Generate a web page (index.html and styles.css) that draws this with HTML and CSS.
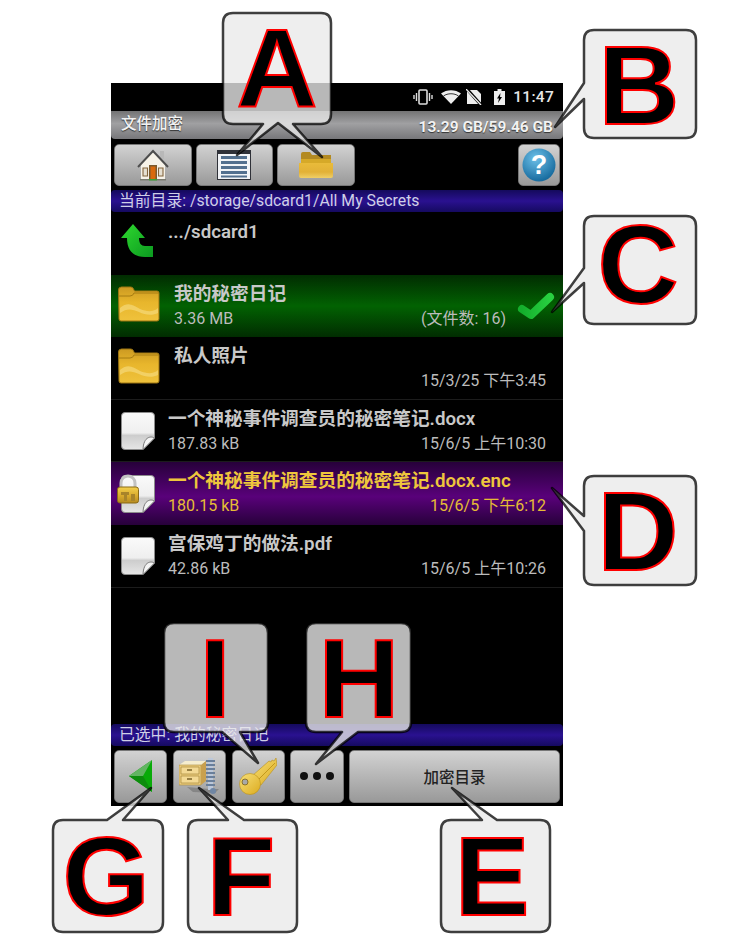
FILE: index.html
```html
<!DOCTYPE html>
<html lang="zh">
<head>
<meta charset="utf-8">
<title>文件加密</title>
<link rel="stylesheet" href="styles.css">
</head>
<body>
<svg class="defs" width="0" height="0" aria-hidden="true">
  <defs>
    <linearGradient id="gFolder" x1="0" y1="0" x2="0" y2="1"><stop offset="0" stop-color="#cc9a22"/><stop offset=".45" stop-color="#e8b62c"/><stop offset="1" stop-color="#efc23c"/></linearGradient>
    <linearGradient id="gOpen" x1="0" y1="0" x2="0" y2="1"><stop offset="0" stop-color="#e9bb3a"/><stop offset=".6" stop-color="#e2b137"/><stop offset="1" stop-color="#f0cf66"/></linearGradient>
    <linearGradient id="gPage" x1="0" y1="0" x2="0" y2="1"><stop offset="0" stop-color="#fafafa"/><stop offset=".55" stop-color="#efefef"/><stop offset=".62" stop-color="#cdcdcd"/><stop offset="1" stop-color="#e6e6e6"/></linearGradient>
    <linearGradient id="gLock" x1="0" y1="0" x2="0" y2="1"><stop offset="0" stop-color="#f3d04e"/><stop offset=".55" stop-color="#d9aa2c"/><stop offset="1" stop-color="#b58a22"/></linearGradient>
    <linearGradient id="gUp" x1="0" y1="0" x2="1" y2="1"><stop offset="0" stop-color="#2fd92f"/><stop offset="1" stop-color="#0b9a20"/></linearGradient>
    <linearGradient id="gCheck" x1="0" y1="0" x2="1" y2="0"><stop offset="0" stop-color="#14ae2c"/><stop offset="1" stop-color="#28d040"/></linearGradient>
    <radialGradient id="gHelp" cx=".4" cy=".3" r=".8"><stop offset="0" stop-color="#6cc0e8"/><stop offset="1" stop-color="#0b5f94"/></radialGradient>
    <linearGradient id="gKey" x1="0" y1="0" x2="1" y2="1"><stop offset="0" stop-color="#f7e07a"/><stop offset="1" stop-color="#dcab1e"/></linearGradient>
    <symbol id="iFolder" viewBox="0 0 42 36">
      <path d="M.5 4a3 3 0 0 1 3-3h9a3 3 0 0 1 3 2l1 2h22.500a2 2 0 0 1 2 2v26a2 2 0 0 1-2 2h-36a2 2 0 0 1-2-2z" fill="url(#gFolder)" stroke="#9c7512"/>
      <path d="M1 10h11q3 0 4-3h25" stroke="#a67c12" fill="none"/>
      <path d="M2 22c8-7 13-3 20 1 7 3 14 3 18-1v5c-6 3-13 2-19-1-7-3-12-4-19 1z" fill="#f7de86" opacity=".6"/>
    </symbol>
    <symbol id="iDoc" viewBox="0 0 34 38">
      <path d="M4 .5h26a3.500 3.500 0 0 1 3.500 3.500v22L22 37.500H4A3.500 3.500 0 0 1 .5 34V4A3.500 3.500 0 0 1 4 .5z" fill="url(#gPage)" stroke="#8c8c8c"/>
      <path d="M33.500 26c-3-2-11-2-11.500 11.500z" fill="#f4f4f4" stroke="#777"/>
    </symbol>
  </defs>
</svg>

<div class="page">
  <main class="phone">
    <div class="status">
      <svg class="st-icon st-vib" viewBox="0 0 20 16"><rect x="6" y="1" width="8" height="14" rx="1" fill="none" stroke="#ddd" stroke-width="1.600"/><path d="M3.500 4v8M1 6v4M16.500 4v8M19 6v4" stroke="#ddd" stroke-width="1.400"/></svg>
      <svg class="st-icon st-wifi" viewBox="0 0 20 14"><path d="M0 3.500C5.500-1 14.500-1 20 3.500L10 14z" fill="#eee"/><path d="M2.500 6c4-3 11-3 15 0" stroke="#000" stroke-width=".8" fill="none"/></svg>
      <svg class="st-icon st-sim" viewBox="0 0 16 16"><path d="M1 1h10l4 4v10H1z" fill="#eee"/><path d="M1 0l14 16" stroke="#000" stroke-width="3"/><path d="M0 0l15 16" stroke="#eee" stroke-width="1.300"/></svg>
      <svg class="st-icon st-bat" viewBox="0 0 11 16"><path d="M3.500 0h4v2H11v14H0V2h3.500z" fill="#eee"/><path d="M6.500 4L3 9.500h2L4 14 8 8H6z" fill="#000"/></svg>
      <span class="time">11:47</span>
    </div>

    <header class="titlebar">
      <span class="title">文件加密</span>
      <span class="storage">13.29 GB/59.46 GB</span>
    </header>

    <nav class="toolbar">
      <button class="btn btn-tool" type="button">
        <svg class="ic-house" viewBox="0 0 32 33">
          <path d="M23 3h4v8h-4z" fill="#b8b8b8"/>
          <path d="M4 15L16 4l12 11v16H4z" fill="#f6f2e8"/>
          <path d="M1 19L16 3l15 16" fill="none" stroke="#4d4d4d" stroke-width="2"/>
          <path d="M12 17h8v14h-8z" fill="#7b5a2e"/>
          <path d="M13.500 18.500h5V31h-5z" fill="#d9690c"/>
          <path d="M6 20h4.500v8H6zM21.500 20H26v8h-4.500z" fill="#e6e0d2" stroke="#84663e" stroke-width="1.100"/>
          <path d="M3 31h26v1.500H3z" fill="#7b7b70"/>
          <path d="M12 31h8v1.500h-8z" fill="#3aa13a"/>
        </svg>
      </button>
      <button class="btn btn-tool" type="button">
        <svg class="ic-list" viewBox="0 0 34 30">
          <path d="M0 0h34v30H0z" fill="#2f3138"/>
          <path d="M1 4h32v25H1z" fill="#f2f4f7"/>
          <path d="M4 6h26v3H4zM4 11h26v3H4zM4 16h26v3H4zM4 21h26v3H4zM4 25.500h26v2H4z" fill="#53708f"/>
        </svg>
      </button>
      <button class="btn btn-tool" type="button">
        <svg class="ic-open" viewBox="0 0 34 26">
          <path d="M2 2q0-2 2-2h7l2 3h19v9H2z" fill="#b38a22"/>
          <path d="M2 7h30v5H2z" fill="#d6a928"/>
          <path d="M0 11h34v13a2 2 0 0 1-2 2H2a2 2 0 0 1-2-2z" fill="url(#gOpen)"/>
        </svg>
      </button>
      <span class="spacer"></span>
      <button class="btn btn-help" type="button">
        <svg class="ic-help" viewBox="0 0 34 34">
          <circle cx="17" cy="17" r="16.500" fill="url(#gHelp)"/>
          <text class="help-mark" x="17" y="26" text-anchor="middle">?</text>
        </svg>
      </button>
    </nav>

    <div class="infobar">当前目录: /storage/sdcard1/All My Secrets</div>

    <section class="list">
      <div class="row row-up">
        <svg class="ic-up" viewBox="0 0 32 33"><path d="M12 0L0 14h6C6 26 12 33 24 33h8V22h-8c-4 0-6-3-6-8h6z" fill="url(#gUp)"/></svg>
        <div class="text">
          <div class="name">.../sdcard1</div>
        </div>
      </div>
      <div class="row row-green row-folder">
        <svg class="ic-folder"><use href="#iFolder"/></svg>
        <div class="text">
          <div class="name">我的秘密日记</div>
          <div class="meta"><span>3.36 MB</span><span>(文件数: 16)</span></div>
        </div>
        <svg class="ic-check" viewBox="0 0 38 28"><path d="M5 17l9 6L33 5" fill="none" stroke="url(#gCheck)" stroke-width="8" stroke-linecap="round" stroke-linejoin="round"/></svg>
      </div>
      <div class="row row-folder row-line">
        <svg class="ic-folder"><use href="#iFolder"/></svg>
        <div class="text">
          <div class="name">私人照片</div>
          <div class="meta"><span></span><span>15/3/25 下午3:45</span></div>
        </div>
      </div>
      <div class="row row-line">
        <svg class="ic-doc"><use href="#iDoc"/></svg>
        <div class="text">
          <div class="name">一个神秘事件调查员的秘密笔记.docx</div>
          <div class="meta"><span>187.83 kB</span><span>15/6/5 上午10:30</span></div>
        </div>
      </div>
      <div class="row row-purple">
        <span class="doc-lock">
          <svg class="ic-doc"><use href="#iDoc"/></svg>
          <svg class="ic-lock" viewBox="0 0 22 30">
            <path d="M4 14V9a7 7 0 0 1 14 0v5" fill="none" stroke="#c2c2c2" stroke-width="3"/>
            <rect x=".5" y="13" width="21" height="16" rx="2.500" fill="url(#gLock)" stroke="#8a6a16"/>
            <path d="M4 18h8v3H4zM7 21h3v6H7zM14 20h4v7h-4z" fill="#a8842a"/>
          </svg>
        </span>
        <div class="text">
          <div class="name">一个神秘事件调查员的秘密笔记.docx.enc</div>
          <div class="meta"><span>180.15 kB</span><span>15/6/5 下午6:12</span></div>
        </div>
      </div>
      <div class="row row-line">
        <svg class="ic-doc"><use href="#iDoc"/></svg>
        <div class="text">
          <div class="name">宫保鸡丁的做法.pdf</div>
          <div class="meta"><span>42.86 kB</span><span>15/6/5 上午10:26</span></div>
        </div>
      </div>
    </section>

    <div class="infobar">已选中: 我的秘密日记</div>

    <nav class="bottombar">
      <button class="btn btn-sq" type="button">
        <svg class="ic-back" viewBox="0 0 23 32"><path d="M23 0v32L0 16z" fill="#08aa08"/><path d="M23 0L0 16h14z" fill="#62b462"/><path d="M0 16l23 16-9-16z" fill="#0c8c0c"/></svg>
      </button>
      <button class="btn btn-sq" type="button">
        <svg class="ic-zip" viewBox="0 0 41 37">
          <path d="M8 29l22 2 10 0-4 4-22-1z" fill="#666" opacity=".5"/>
          <path d="M0 7l6-4h21l-5 4z" fill="#f5edcf"/>
          <path d="M0 7h22v20H0z" fill="#eacb7c" stroke="#a98a3c" stroke-width=".6"/>
          <path d="M22 7l5-4v20l-5 4z" fill="#c9a04e"/>
          <path d="M2 9h18v7H2zM2 18h18v7H2z" fill="#f3d993" stroke="#a98a3c" stroke-width=".7"/>
          <path d="M8 12h5M8 21h5" stroke="#7a6128" stroke-width="1.300"/>
          <path d="M29 0h5v32h-5z" fill="#bcc8da"/>
          <path d="M27 3h9M27 7h9M27 11h9M27 15h9M27 19h9M27 23h9M27 27h9" stroke="#6a7f9a" stroke-width="1.800"/>
          <circle cx="34" cy="33" r="3" fill="#6f86a4"/>
        </svg>
      </button>
      <button class="btn btn-sq" type="button">
        <svg class="ic-key" viewBox="0 0 38 37">
          <path d="M13 18L30 3l2 1 1-2 2 1 2-3 1 7-16 20-6-1z" fill="url(#gKey)" stroke="#b8901c" stroke-width=".6"/>
          <path d="M18 23L36 5" fill="none" stroke="#c2981c" stroke-width="1"/>
          <circle cx="11" cy="26" r="10.500" fill="url(#gKey)" stroke="#b8901c" stroke-width=".6"/>
          <circle cx="6" cy="24" r="3" fill="#a8a8a8" stroke="#7d6214" stroke-width=".8"/>
        </svg>
      </button>
      <button class="btn btn-sq btn-dots" type="button"><i></i><i></i><i></i></button>
      <button class="btn btn-wide" type="button">加密目录</button>
    </nav>
  </main>

  <svg class="callouts" viewBox="0 0 750 939" width="750" height="939">
    <g class="bubble">
      <path d="M233 13H321Q331 13 331 23V114Q331 124 321 124H293L322 157 278 123 237 155 263 124H233Q223 124 223 114V23Q223 13 233 13Z"/>
      <text x="277" y="107">A</text>
    </g>
    <g class="bubble">
      <path d="M594 30H686Q696 30 696 40V128Q696 138 686 138H594Q584 138 584 128V99L555 127 584 83V40Q584 30 594 30Z"/>
      <text x="639" y="124">B</text>
    </g>
    <g class="bubble">
      <path d="M594 216H686Q696 216 696 226V314Q696 324 686 324H594Q584 324 584 314V283L552 312 584 268V226Q584 216 594 216Z"/>
      <text x="638" y="303">C</text>
    </g>
    <g class="bubble">
      <path d="M594 476H686Q696 476 696 486V575Q696 585 686 585H594Q584 585 584 575V531L552 488 584 516V486Q584 476 594 476Z"/>
      <text x="638" y="570">D</text>
    </g>
    <g class="bubble">
      <path d="M451 820H482L452 788 497 820H540Q550 820 550 830V922Q550 932 540 932H451Q441 932 441 922V830Q441 820 451 820Z"/>
      <text x="492" y="915">E</text>
    </g>
    <g class="bubble">
      <path d="M198 820H228L199 788 244 820H287Q297 820 297 830V922Q297 932 287 932H198Q188 932 188 922V830Q188 820 198 820Z"/>
      <text x="241" y="915">F</text>
    </g>
    <g class="bubble">
      <path d="M63 820H107L151 788 123 820H153Q163 820 163 830V922Q163 932 153 932H63Q53 932 53 922V830Q53 820 63 820Z"/>
      <text x="106" y="915">G</text>
    </g>
    <g class="bubble">
      <path d="M374 623H401Q411 623 411 633V722Q411 732 401 732H358L316 764 342 732H316Q306 732 306 722V633Q306 623 316 623Z"/>
      <text x="359" y="717">H</text>
    </g>
    <g class="bubble">
      <path d="M174 623H258Q268 623 268 633V722Q268 732 258 732H240L258 763 222 732H174Q164 732 164 722V633Q164 623 174 623Z"/>
      <text x="215" y="717">I</text>
    </g>
  </svg>
</div>
</body>
</html>
```

FILE: styles.css
```css
* { box-sizing: border-box; }

html, body { margin: 0; padding: 0; background: #fff; }

body { font-family: Roboto, "Noto Sans CJK SC", sans-serif; }

.defs { position: absolute; }

.page {
  position: relative;
  width: 750px;
  height: 939px;
  padding: 83px 187px 0 111px;
  overflow: hidden;
}

.phone {
  width: 452px;
  height: 723px;
  background: #000;
  display: flex;
  flex-direction: column;
  color: #d6d6d6;
}

/* status bar */
.status {
  height: 28px;
  display: flex;
  align-items: center;
  justify-content: flex-end;
  padding-right: 9px;
  flex: none;
}
.st-icon { display: block; flex: none; }
.st-vib { width: 20px; height: 16px; margin-right: 8px; }
.st-wifi { width: 20px; height: 14px; margin-right: 5px; }
.st-sim { width: 16px; height: 16px; margin-right: 12px; }
.st-bat { width: 11px; height: 16px; margin-right: 8px; }
.time { font-size: 15.5px; font-weight: 500; color: #e6e6e6; letter-spacing: .3px; }

/* title bar */
.titlebar {
  height: 28px;
  flex: none;
  display: flex;
  align-items: center;
  justify-content: space-between;
  padding: 0 10px;
  background: linear-gradient(#737374, #a0a0a2 45%, #77777a);
  border-radius: 0 0 4px 4px;
  color: #f2f2f2;
}
.title { font-size: 15.5px; line-height: 20px; margin-bottom: 2px; font-weight: 500; text-shadow: 0 1px 1px #333; }
.storage { font-size: 15.5px; line-height: 20px; margin-top: 3px; font-weight: 700; text-shadow: 0 1px 1px #333; }

/* buttons */
.btn {
  display: flex;
  align-items: center;
  justify-content: center;
  padding: 0;
  border: 1px solid #777;
  border-radius: 5px;
  background: linear-gradient(#d2d2d2, #999);
  color: #222;
  font-family: inherit;
  flex: none;
}

.toolbar {
  height: 51px;
  flex: none;
  display: flex;
  align-items: center;
  gap: 4px;
  padding: 0 3px;
}
.btn-tool { width: 77.5px; height: 42px; }
.spacer { flex: 1; }
.btn-help { width: 42px; height: 42px; }

.ic-house { width: 32px; height: 33px; }
.ic-list { width: 34px; height: 30px; }
.ic-open { width: 34px; height: 26px; }
.ic-help { width: 34px; height: 34px; }
.help-mark { font: 700 27px "Liberation Sans", sans-serif; fill: #fff; }

/* info bars */
.infobar {
  height: 22px;
  flex: none;
  padding: 0 8px 3px;
  display: flex;
  align-items: center;
  font-size: 15.8px;
  color: #cfcfe6;
  border-radius: 4px;
  background: linear-gradient(#140a5c, #2a1190 50%, #150a60);
  white-space: nowrap;
}

/* list */
.list { flex: 1; min-height: 0; }

.row {
  height: 62.6px;
  display: flex;
  align-items: center;
  padding: 0 17px 0 10px;
}
.row-line { border-bottom: 1px solid #1c1c1c; }
.row-green {
  background: linear-gradient(#012c01, #026202 50%, #012c01);
  padding-right: 8px;
}
.row-purple {
  background: linear-gradient(#27013a, #59017a 55%, #27013a);
  color: #eec63c;
}
.row-folder { padding-left: 7px; }

.text { flex: 1; min-width: 0; margin-left: 13px; align-self: flex-start; padding-top: 6.5px; }
.row-folder .text { margin-left: 14px; padding-top: 6px; }
.row-up .text { margin-left: 15px; padding-top: 7px; }
.row-purple .text { padding-top: 6px; }

.name {
  font-size: 18.7px;
  font-weight: 600;
  line-height: 27px;
  white-space: nowrap;
  color: #c8c8c8;
}
.row-purple .name { color: #eec63c; }

.meta {
  margin-top: 1px;
  display: flex;
  justify-content: space-between;
  font-size: 16px;
  line-height: 20px;
  color: #bcbcbc;
}
.row-purple .meta { color: #e5bc35; }

.ic-up { width: 32px; height: 33px; flex: none; margin-bottom: 5px; }
.ic-folder { width: 42px; height: 36px; flex: none; margin-bottom: 3px; }
.ic-doc { width: 34px; height: 38px; flex: none; display: block; }
.ic-check { width: 38px; height: 28px; flex: none; margin-left: 11px; }

.doc-lock { position: relative; width: 34px; height: 38px; flex: none; }
.ic-lock { position: absolute; left: -4px; top: -1px; width: 22px; height: 30px; }

/* bottom bar */
.bottombar {
  height: 60px;
  flex: none;
  display: flex;
  align-items: center;
  gap: 5.5px;
  padding: 0 3px;
}
.btn-sq { width: 53.25px; height: 53px; }
.btn-wide { flex: 1 1 0; height: 53px; font-size: 15.5px; font-weight: 500; }

.ic-back { width: 23px; height: 32px; }
.ic-zip { width: 41px; height: 37px; }
.ic-key { width: 38px; height: 37px; }
.btn-dots { gap: 5px; }
.btn-dots i { width: 8px; height: 8px; border-radius: 50%; background: #111; display: block; }

/* callouts */
.callouts { position: absolute; left: 0; top: 0; }
.bubble path {
  fill: rgba(234, 234, 234, .79);
  stroke: rgba(0, 0, 0, .75);
  stroke-width: 2.5;
  stroke-linejoin: round;
}
.bubble text {
  font: 700 112px "Liberation Sans", sans-serif;
  text-anchor: middle;
  fill: #000;
  stroke: #f00;
  stroke-width: 2;
}
```
